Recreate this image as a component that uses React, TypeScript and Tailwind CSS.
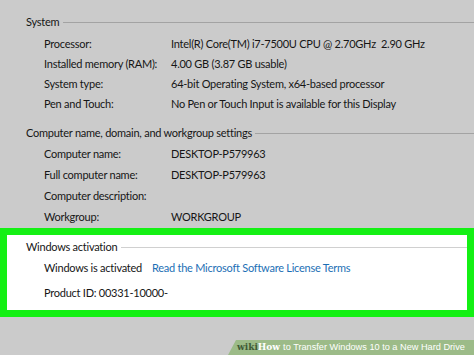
export default function App() {
  const system = [
    ["Processor:", "Intel(R) Core(TM) i7-7500U CPU @ 2.70GHz\u00a0 2.90 GHz"],
    ["Installed memory (RAM):", "4.00 GB (3.87 GB usable)"],
    ["System type:", "64-bit Operating System, x64-based processor"],
    ["Pen and Touch:", "No Pen or Touch Input is available for this Display"],
  ];
  const computer = [
    ["Computer name:", "DESKTOP-P579963"],
    ["Full computer name:", "DESKTOP-P579963"],
    ["Computer description:", ""],
    ["Workgroup:", "WORKGROUP"],
  ];

  return (
    <div
      className="w-[474px] h-[355px] overflow-hidden bg-[#cbcbcb] text-[#161616] text-[11px] tracking-[-0.25px] relative"
      style={{ fontFamily: 'Lato, "Noto Sans", sans-serif' }}
    >
      {/* System */}
      <div className="pt-[13px]">
        <div className="flex items-center pl-[26px] h-[18px]">
          <span>System</span>
          <div className="flex-1 h-px bg-[#a3a3a3] ml-[4px]" />
        </div>
        <div className="pt-[3px]">
          {system.map(([k, v]) => (
            <div key={k} className="flex h-[20px] items-center pl-[44px] whitespace-nowrap">
              <span className="w-[127px] shrink-0">{k}</span>
              <span>{v}</span>
            </div>
          ))}
        </div>
      </div>

      {/* Computer */}
      <div className="pt-[10px]">
        <div className="flex items-center pl-[26px] h-[18px]">
          <span className="whitespace-nowrap">Computer name, domain, and workgroup settings</span>
          <div className="flex-1 h-px bg-[#a3a3a3] ml-[3px]" />
        </div>
        <div className="pt-[2px]">
          {computer.map(([k, v]) => (
            <div key={k} className="flex h-[21px] items-center pl-[44px] whitespace-nowrap">
              <span className="w-[127px] shrink-0">{k}</span>
              <span>{v}</span>
            </div>
          ))}
        </div>
      </div>

      {/* Activation */}
      <div className="h-[89px] border-[7px] border-[#14f014] bg-white">
        <div className="flex items-center pl-[19px] h-[18px] mt-[3px]">
          <span>Windows activation</span>
          <div className="flex-1 h-px bg-[#d0d0d0] ml-[4px]" />
        </div>
        <div className="flex items-center pl-[37px] h-[24px]">
          <span>Windows is activated</span>
          <span className="ml-[10px] text-[#1c6fb5]">Read the Microsoft Software License Terms</span>
        </div>
        <div className="flex items-center pl-[37px] h-[26px]">
          <span>Product ID: 00331-10000-</span>
        </div>
      </div>

      {/* wikiHow banner */}
      <div className="absolute right-0 bottom-0 h-[15px] w-[246px] flex items-center tracking-normal">
        <svg className="absolute inset-0" width="246" height="15" viewBox="0 0 246 15">
          <polygon points="8,0 246,0 246,15 0,15" fill="#9cbb88" />
        </svg>
        <div className="relative pl-[9px] flex items-baseline whitespace-nowrap text-[9px] leading-none">
          <span className="text-[#3f5a36] font-bold" style={{ fontFamily: '"DejaVu Serif", serif' }}>wiki</span>
          <span className="text-white font-bold" style={{ fontFamily: '"DejaVu Serif", serif' }}>How</span>
          <span className="text-white ml-[3px] text-[9.2px]" style={{ fontFamily: '"Liberation Sans", sans-serif' }}>
            to Transfer Windows 10 to a New Hard Drive
          </span>
        </div>
      </div>
    </div>
  );
}
